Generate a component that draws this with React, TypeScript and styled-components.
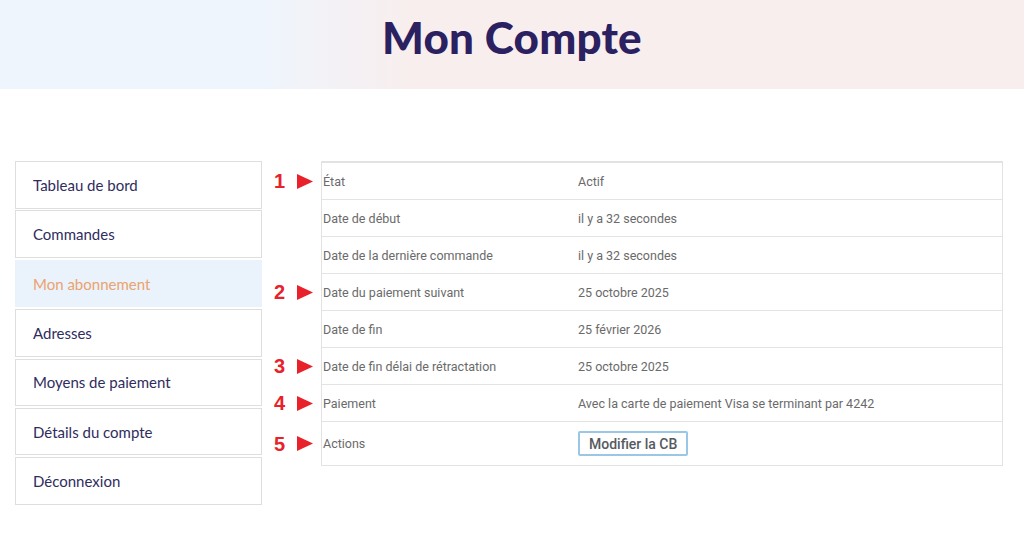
import React from "react";
import styled, { createGlobalStyle } from "styled-components";

const Global = createGlobalStyle`
  html, body { margin: 0; padding: 0; background: #ffffff; }
  body { font-family: "Roboto", "Liberation Sans", sans-serif; }
`;

const Page = styled.div`
  width: 1024px;
  min-height: 538px;
`;

const Hero = styled.header`
  height: 89px;
  background: linear-gradient(90deg, #eef5fd 0%, #eef5fd 25%, #f8eeee 40%, #f9eeee 100%);
  display: flex;
  justify-content: center;
  align-items: flex-start;
`;

const Title = styled.h1`
  margin: 0;
  padding-top: 10px;
  font-family: "Lato", "Noto Sans", sans-serif;
  font-weight: 900;
  font-size: 44px;
  line-height: 54px;
  color: #2b2160;
  letter-spacing: 0.2px;
`;

const Content = styled.main`
  display: flex;
  align-items: flex-start;
  gap: 59px;
  padding: 72px 20px 0 15px;
`;

const Nav = styled.nav`
  width: 247px;
  display: flex;
  flex-direction: column;
  gap: 1.9px;
`;

const NavItem = styled.a<{ $active?: boolean }>`
  display: flex;
  align-items: center;
  box-sizing: border-box;
  height: 47.5px;
  padding-left: 17px;
  border: 1px solid ${(p) => (p.$active ? "#eaf2fc" : "#dedede")};
  background: ${(p) => (p.$active ? "#eaf2fc" : "#ffffff")};
  color: ${(p) => (p.$active ? "#eaa36e" : "#2f2c5e")};
  font-family: "Lato", "Noto Sans", sans-serif;
  font-size: 15px;
  text-decoration: none;
`;

const Table = styled.div`
  width: 682px;
  box-sizing: border-box;
  border: 1px solid #e2e2e2;
  border-top: 2px solid #e2e2e2;
`;

const Row = styled.div<{ $tall?: boolean }>`
  position: relative;
  display: grid;
  grid-template-columns: 255px 1fr;
  align-items: center;
  height: ${(p) => (p.$tall ? "43px" : "36px")};
  border-top: 1px solid #e3e3e3;
  &:first-child { border-top: none; height: 36px; }
`;

const Cell = styled.div`
  padding-left: 1px;
  font-family: "Roboto", "Liberation Sans", sans-serif;
  font-size: 12.5px;
  color: #6a6a6a;
  white-space: nowrap;
`;

const Marker = styled.div`
  position: absolute;
  right: calc(100% + 9px);
  top: 50%;
  transform: translateY(-50%);
  display: flex;
  align-items: center;
  gap: 12px;
  color: #e8212a;
  font-family: "Liberation Sans", "Arial", sans-serif;
  font-weight: 700;
  font-size: 20px;
  line-height: 20px;
`;

const Button = styled.button`
  box-sizing: border-box;
  height: 25px;
  padding: 0 9px;
  border: 2px solid #9ac7e6;
  border-radius: 2px;
  background: #ffffff;
  color: #555a60;
  font-family: "Roboto", "Liberation Sans", sans-serif;
  font-weight: 500;
  font-size: 14px;
  cursor: pointer;
`;

const Arrow = () => (
  <svg width="16" height="15" viewBox="0 0 16 15">
    <polygon points="0,0 16,7.5 0,15" fill="#e8212a" />
  </svg>
);

const navItems = [
  "Tableau de bord",
  "Commandes",
  "Mon abonnement",
  "Adresses",
  "Moyens de paiement",
  "Détails du compte",
  "Déconnexion",
];

type RowData = { label: string; value?: string; mark?: number; action?: boolean };

const rows: RowData[] = [
  { label: "État", value: "Actif", mark: 1 },
  { label: "Date de début", value: "il y a 32 secondes" },
  { label: "Date de la dernière commande", value: "il y a 32 secondes" },
  { label: "Date du paiement suivant", value: "25 octobre 2025", mark: 2 },
  { label: "Date de fin", value: "25 février 2026" },
  { label: "Date de fin délai de rétractation", value: "25 octobre 2025", mark: 3 },
  { label: "Paiement", value: "Avec la carte de paiement Visa se terminant par 4242", mark: 4 },
  { label: "Actions", mark: 5, action: true },
];

export default function App() {
  return (
    <Page>
      <Global />
      <Hero>
        <Title>Mon Compte</Title>
      </Hero>
      <Content>
        <Nav>
          {navItems.map((n) => (
            <NavItem key={n} href="#" $active={n === "Mon abonnement"}>
              {n}
            </NavItem>
          ))}
        </Nav>
        <Table>
          {rows.map((r) => (
            <Row key={r.label} $tall={r.action}>
              {r.mark !== undefined && (
                <Marker>
                  <span>{r.mark}</span>
                  <Arrow />
                </Marker>
              )}
              <Cell>{r.label}</Cell>
              <Cell>{r.action ? <Button>Modifier la CB</Button> : r.value}</Cell>
            </Row>
          ))}
        </Table>
      </Content>
    </Page>
  );
}
